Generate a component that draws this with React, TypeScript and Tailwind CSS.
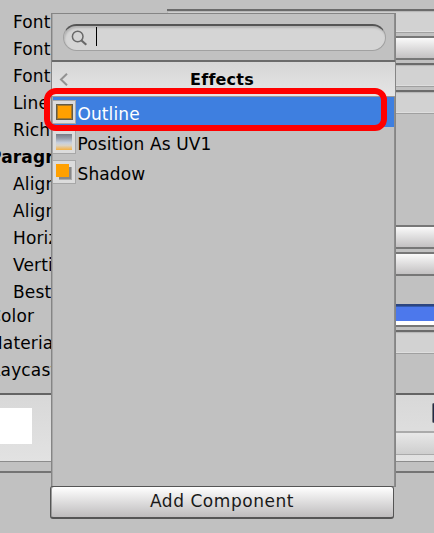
import type { ReactNode } from "react";

type Control = "field" | "button" | "color" | "none";

const rows: { label: string; control: Control; className: string }[] = [
    { label: "Font", control: "field", className: "pl-[13px]" },
    { label: "Font", control: "button", className: "pl-[13px]" },
    { label: "Font", control: "field", className: "pl-[13px]" },
    { label: "Line", control: "field", className: "pl-[13px]" },
    { label: "Rich", control: "none", className: "pl-[13px]" },
    { label: "Paragraph", control: "none", className: "-ml-[11px] font-bold" },
    { label: "Alignment", control: "none", className: "pl-[13px]" },
    { label: "Align", control: "none", className: "pl-[13px]" },
    { label: "Horizontal", control: "button", className: "pl-[13px]" },
    { label: "Vertical", control: "button", className: "pl-[13px]" },
    { label: "Best", control: "none", className: "pl-[13px]" },
    { label: "Color", control: "color", className: "-ml-[11px]" },
    { label: "Material", control: "field", className: "-ml-[12px]" },
    { label: "Raycast", control: "none", className: "-ml-[11px]" },
];

function RowControl({ type }: { type: Control }) {
    if (type === "field") {
        return <div className="mt-px h-[24px] flex-1 border-t-2 border-b border-t-[#6b6b6b] border-b-[#a0a0a0] bg-[#d2d2d2] shadow-[inset_1px_1px_1px_#b5b5b5,inset_0_-1px_0_#dedede]" />;
    }
    if (type === "button") {
        return <div className="mt-px h-[24px] flex-1 border-t-2 border-b-2 border-[#777] bg-linear-to-b from-[#fafafa] to-[#c3c1c2]" />;
    }
    if (type === "color") {
        return (
            <div className="mt-[2px] flex h-[23px] flex-1 flex-col border-t-2 border-b-2 border-t-[#2c457f] border-b-[#777]">
                <div className="h-[15px] bg-[#4c78ec] shadow-[inset_0_1px_0_#345aae]" />
                <div className="h-[4px] bg-white" />
            </div>
        );
    }
    return null;
}

function Inspector() {
    return (
        <div className="h-[533px] overflow-hidden pt-[8px]">
            {rows.map(({ label, control, className }, i) => (
                <div key={i} className={control === "color" ? "-mt-[3px] flex h-[27px]" : "flex h-[27px]"}>
                    <div className="mr-[115px] w-[52px] shrink-0 overflow-hidden">
                        <div className={`pt-px whitespace-nowrap leading-[27px] tracking-[0.15px] ${className}`}>{label}</div>
                    </div>
                    <RowControl type={control} />
                </div>
            ))}

            {/* material preview */}
            <div className="mt-[10px] flex h-[69px] justify-between border-t-2 border-b border-t-[#646464] border-b-[#8c8c8c] bg-linear-to-b from-[#d8d8d8] to-[#e2e2e2]">
                <div className="mt-[13px] h-[36px] w-[32px] bg-white" />
                <div className="flex w-[38px] flex-col">
                    <div className="mt-[8px] h-[20px] w-[2px] self-end rounded-l-sm border-l border-[#777] bg-[#202a48]" />
                    <div className="mt-[8px] h-[24px] border-t-2 border-b border-[#aaa] bg-linear-to-b from-[#e8e8e8] to-[#cecece]" />
                </div>
            </div>
            <div className="mt-[9px] h-[2px] bg-[#747474]" />
        </div>
    );
}

function IconTile({ children }: { children: ReactNode }) {
    return (
        <svg width="23" height="24" viewBox="0 0 23 24" shapeRendering="crispEdges" className="shrink-0">
            <path d="M0 0h23v24H0z" fill="#a7a7a7" />
            <path d="M0 1h22v22H0z" fill="#dcdcdc" />
            {children}
        </svg>
    );
}

function OutlineIcon() {
    return (
        <IconTile>
            <path d="M3 4h17v16H3z" fill="#625b46" />
            <path d="M4 5h15v14H4z" fill="#a87a28" />
            <path d="M5 6h13v12H5z" fill="#ffa000" />
        </IconTile>
    );
}

function PositionIcon() {
    return (
        <IconTile>
            <defs>
                <linearGradient id="uv" x1="0" y1="0" x2="0" y2="1">
                    <stop offset="0" stopColor="#777c86" />
                    <stop offset=".25" stopColor="#949ba7" />
                    <stop offset=".55" stopColor="#c7d0df" />
                    <stop offset=".72" stopColor="#dbd2c2" />
                    <stop offset="1" stopColor="#f5b144" />
                </linearGradient>
            </defs>
            <path d="M3 4h16v16H3z" fill="url(#uv)" />
        </IconTile>
    );
}

function ShadowIcon() {
    return (
        <IconTile>
            <path d="M6 7h13v13H6z" fill="#aaa" />
            <path d="M6 7h12v12H6z" fill="#888" />
            <path d="M3 4h13v13H3z" fill="#ffa000" />
        </IconTile>
    );
}

const effects = [
    { name: "Outline", icon: <OutlineIcon />, row: "bg-[#3e7fe0] text-white" },
    { name: "Position As UV1", icon: <PositionIcon />, row: "" },
    { name: "Shadow", icon: <ShadowIcon />, row: "" },
];

function AddComponentMenu() {
    return (
        <div className="absolute top-[13px] left-[50px] w-[346px]">
            <div className="ml-px h-[474px] w-[345px] border border-[#858585] bg-[#c1c1c1] shadow-[inset_1px_0_0_#a6a6a6,inset_-1px_0_0_#8d8d8d]">
                <div className="h-[48px] border-b-2 border-[#6b6b6b] pt-[10px] pr-[9px] pl-[11px]">
                    <div className="flex h-[27px] items-start rounded-full border border-t-2 border-[#a1a1a1] border-t-[#555] bg-[#d5d5d5] pl-[7px] shadow-[inset_1px_2px_2px_#b5b5b5]">
                        <svg width="17" height="17" viewBox="0 0 17 17" fill="none" stroke="#686868" className="mt-[4px]">
                            <circle cx="6.7" cy="6.5" r="5.3" strokeWidth="1.5" />
                            <path d="m10.5 10.5 4.8 4.3" strokeWidth="2.2" />
                        </svg>
                        <div className="mt-px ml-[8px] h-[19px] w-px bg-black" />
                    </div>
                </div>

                <div className="flex h-[35px] items-center border-b border-[#999] bg-linear-to-b from-[#d6d6d6] to-[#e5e5e5] pl-[7px]">
                    <svg width="9" height="13" viewBox="0 0 9 13" fill="none" stroke="#929292" strokeWidth="2">
                        <path d="M8 .8 2 6.5 8 12.2" />
                    </svg>
                    <div className="flex-1 pt-px pr-[19px] text-center text-[16px] font-bold tracking-[0.2px]">Effects</div>
                </div>

                {effects.map(({ name, icon, row }) => (
                    <div key={name} className={`mx-px flex h-[30px] items-center ${row}`}>
                        {icon}
                        <span className="ml-[1.5px] pt-[4px] leading-[26px] tracking-[0.1px]">{name}</span>
                    </div>
                ))}
            </div>

            <div className="-mt-px flex h-[33px] w-[344px] items-center justify-center rounded-[3px] border border-b-2 border-[#555] bg-linear-to-b from-white to-[#bebcbd] text-[17px] tracking-[0.55px] text-[#191919] shadow-[inset_1px_0_0_#999]">
                Add Component
            </div>
        </div>
    );
}

export default function App() {
    return (
        <div className="relative h-[533px] w-[434px] overflow-hidden bg-[#c1c1c1] font-['DejaVu_Sans','Noto_Sans',sans-serif] text-[17px] text-black">
            <Inspector />
            <AddComponentMenu />

            {/* highlight marker */}
            <div className="absolute top-[88px] left-[44px] h-[43px] w-[343px] rounded-[12px] border-[6px] border-[#ff0000]" />
        </div>
    );
}
